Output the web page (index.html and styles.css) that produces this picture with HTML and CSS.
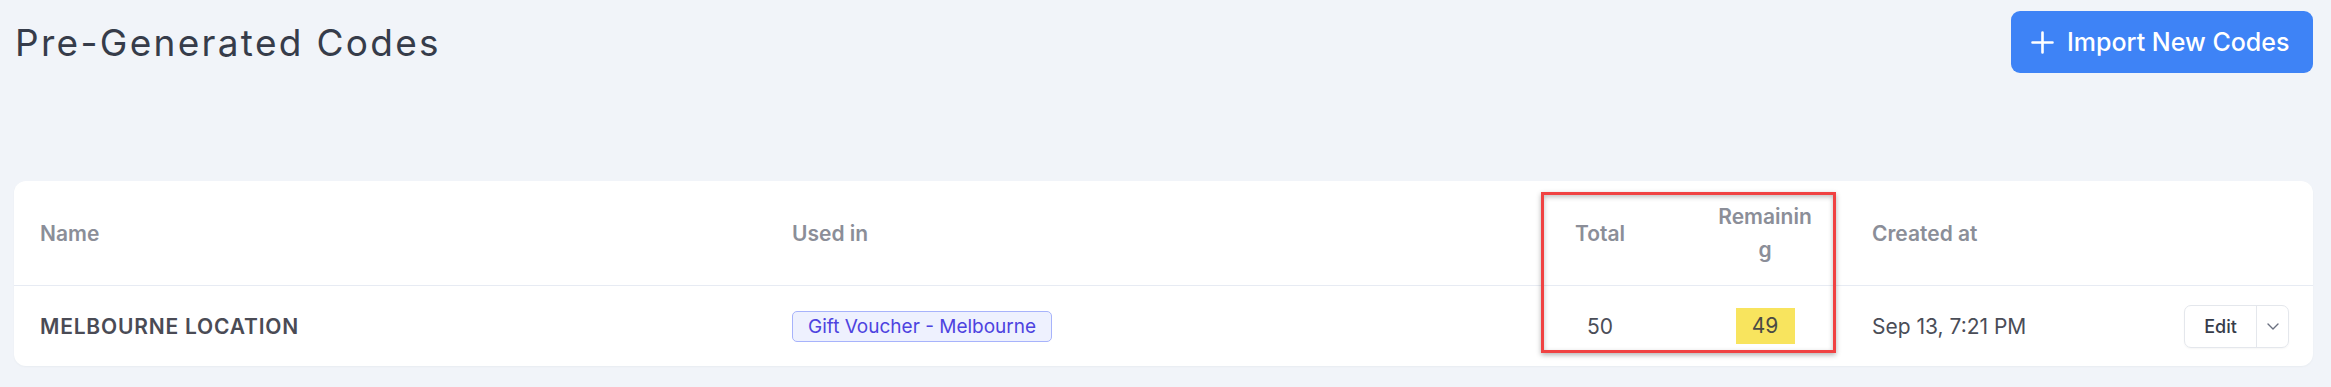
FILE: index.html
```html
<!doctype html>
<html>

<head>
  <title>Pre-Generated Codes</title>
  <link rel="stylesheet" href="styles.css">
</head>

<body>
  <div class="page">
    <header class="page-header">
      <h1>Pre-Generated Codes</h1>
      <button class="btn btn--primary">
        <svg width="23" height="23" viewBox="0 0 23 23" fill="none" stroke="currentColor" stroke-width="2.6"
          stroke-linecap="round">
          <path d="M11.5 1.5v20M1.5 11.5h20" />
        </svg>
        Import New Codes
      </button>
    </header>

    <section class="card">
      <div class="table">
        <div class="row row--head">
          <div class="cell">Name</div>
          <div class="cell">Used in</div>
          <div class="cell cell--center">Total</div>
          <div class="cell cell--center"><span class="narrow">Remainin<wbr>g</span></div>
          <div class="cell">Created at</div>
          <div class="cell"></div>
        </div>
        <div class="row">
          <div class="cell cell--name">MELBOURNE LOCATION</div>
          <div class="cell"><span class="badge">Gift Voucher - Melbourne</span></div>
          <div class="cell cell--center">50</div>
          <div class="cell cell--center"><mark class="highlight">49</mark></div>
          <div class="cell">Sep 13, 7:21 PM</div>
          <div class="cell cell--actions">
            <div class="split-btn">
              <button class="split-btn__main">Edit</button>
              <button class="split-btn__toggle">
                <svg width="12" height="7" viewBox="0 0 12 7" fill="none" stroke="currentColor" stroke-width="1.4"
                  stroke-linecap="round" stroke-linejoin="round">
                  <path d="M1 1l5 5 5-5" />
                </svg>
              </button>
            </div>
          </div>
        </div>
      </div>
      <!-- annotation box round the two count columns -->
      <div class="callout"></div>
    </section>
  </div>
</body>

</html>
```

FILE: styles.css
```css
* {
  box-sizing: border-box;
  margin: 0;
  padding: 0;
  font-size: inherit;
  font-family: inherit;
  font-weight: inherit;
  background: transparent;
  border: none;
  outline: none;
  color: inherit;
}

html {
  font-family: Inter, "Open Sans", "Liberation Sans", sans-serif;
  background: #f1f4f9;
  color: #4a4d57;
}

html,
body {
  width: 100%;
  height: 100%;
  overflow: hidden;
}

.page {
  padding: 11px 18px 0 14px;
  display: flex;
  flex-direction: column;
  gap: 108px;
}

/** Header */

.page-header {
  display: flex;
  flex-direction: row;
  align-items: center;
  justify-content: space-between;
  height: 62px;
}

.page-header h1 {
  font-size: 37px;
  font-weight: 400;
  letter-spacing: 2.3px;
  color: #363c4a;
  padding-left: 1px;
}

.btn {
  display: flex;
  flex-direction: row;
  align-items: center;
  cursor: pointer;
}

.btn--primary {
  height: 62px;
  width: 302px;
  padding: 0 20px;
  gap: 13px;
  border-radius: 9px;
  background: #3e83f6;
  color: #fff;
  font-size: 25px;
  font-weight: 500;
}

/** Card + table */

.card {
  position: relative;
  background: #fff;
  border-radius: 12px;
  box-shadow: 0 1px 2px rgba(30, 40, 60, 0.04);
}

.row {
  display: grid;
  grid-template-columns: 756px 750px 160px 170px 300px 1fr;
  align-items: center;
  height: 80px;
}

.row--head {
  height: 105px;
  border-bottom: 1px solid #e7ebf3;
  color: #8b8e98;
  font-weight: 600;
  font-size: 21px;
  line-height: 33px;
}

.cell {
  padding: 0 22px;
  font-size: 21px;
}

.cell:first-child {
  padding-left: 26px;
}

.cell--center {
  text-align: center;
}

.narrow {
  display: inline-block;
  width: min-content;
}

.cell--name {
  font-weight: 600;
  letter-spacing: 0.8px;
  color: #4a4b55;
}

.cell--actions {
  display: flex;
  justify-content: flex-end;
  padding-right: 24px;
}

.badge {
  display: inline-block;
  height: 31px;
  line-height: 29px;
  padding: 0 15px;
  border: 1px solid #a7b3fb;
  border-radius: 5px;
  background: #eef1fe;
  color: #4d43e0;
  font-size: 19px;
}

.highlight {
  display: inline-block;
  width: 59px;
  height: 36px;
  line-height: 36px;
  background: #f8e45e;
  color: #4a4b45;
}

.split-btn {
  display: flex;
  flex-direction: row;
  height: 43px;
  border: 1px solid #e4e7ec;
  border-radius: 7px;
  box-shadow: 0 1px 2px rgba(0, 0, 0, 0.04);
}

.split-btn button {
  display: flex;
  align-items: center;
  justify-content: center;
  cursor: pointer;
}

.split-btn__main {
  width: 72px;
  border-right: 1px solid #e4e7ec;
  font-size: 18px;
  font-weight: 500;
  color: #363c4a;
}

.split-btn__toggle {
  width: 31px;
  color: #6b7080;
}

/** Annotation */

.callout {
  position: absolute;
  left: 1527px;
  top: 11px;
  width: 295px;
  height: 161px;
  border: 3px solid #f04242;
  box-shadow: 0 2px 5px rgba(0, 0, 0, 0.3), inset 0 2px 5px rgba(0, 0, 0, 0.25);
  pointer-events: none;
}
```
